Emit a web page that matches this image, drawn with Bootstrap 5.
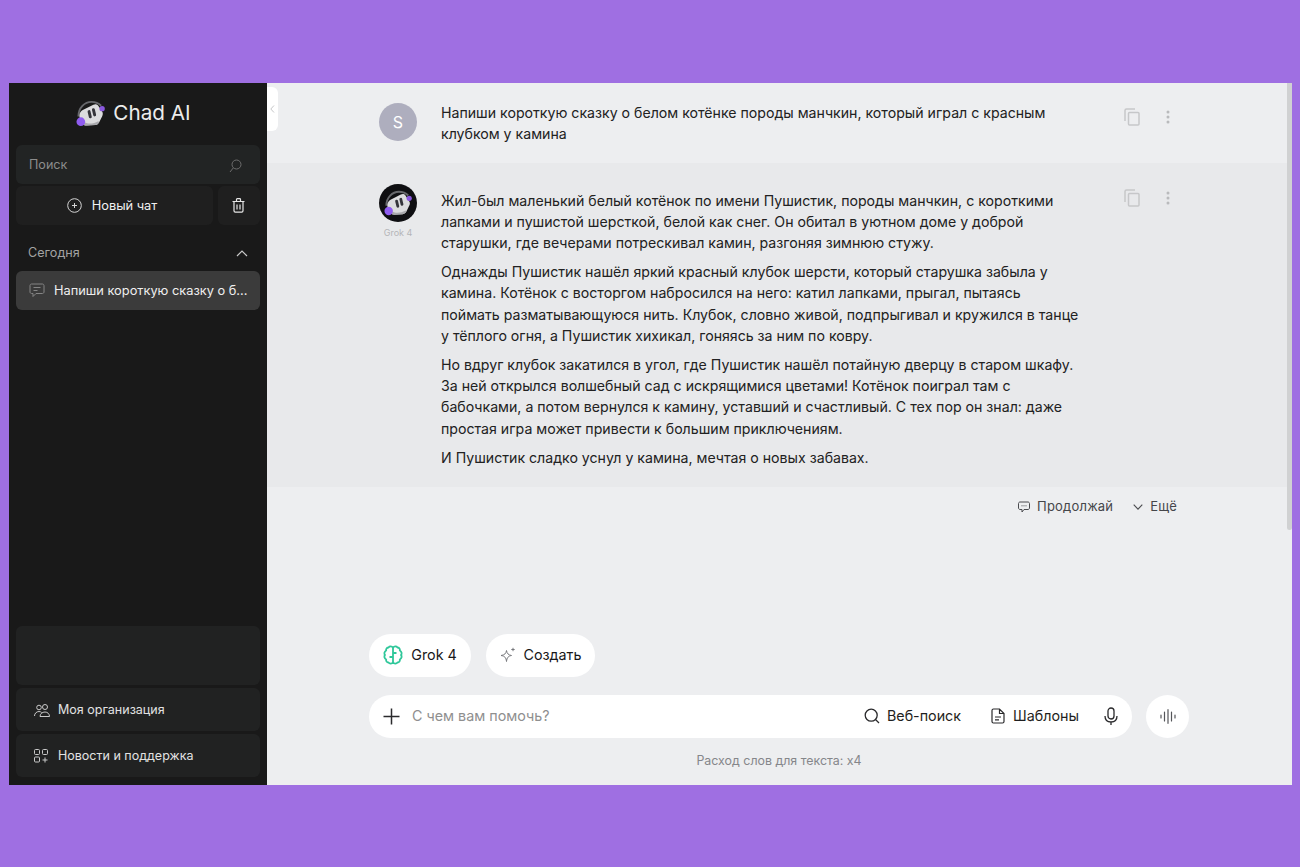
<!DOCTYPE html>
<html lang="ru">
<head>
    <meta charset="utf-8">
    <title>Chad AI</title>
    <link href="https://cdn.jsdelivr.net/npm/bootstrap@5.3.0/dist/css/bootstrap.min.css" rel="stylesheet">
    <style>
        html, body { height: 100%; }
        body {
            background: #9f6fe2;
            padding: 83px 8px 82px 9px;
            font-family: Inter, "Liberation Sans", sans-serif;
            overflow: hidden;
        }
        .app-frame { height: 702px; position: relative; }

        /* sidebar */
        .side-panel { width: 258px; background: #191919; padding: 0 7px 8px; color: #e8e8e8; }
        .brand-row { height: 62px; color: #ececec; font-size: 20.7px; gap: 8px; padding: 0 9px 2px 0; }
        .side-box { background: #212222; border-radius: 6px; }
        .search-box { height: 39px; padding: 2px 18px 0 13px; color: #8c8c8c; font-size: 12.6px; margin-bottom: 2px; background: #222424; }
        .new-chat { height: 39px; font-size: 12.8px; color: #f0f0f0; gap: 10px; margin-right: 5px; background: #1f1f1f; padding-right: 5px; }
        .trash-btn { width: 42px; height: 39px; flex-shrink: 0; background: #1f1f1f; padding-right: 2px; }
        .group-title { height: 46px; padding: 10px 12px 0; color: #a3a3a3; font-size: 12.6px; }
        .chat-item { height: 39px; background: #3b3b3b; border-radius: 6px; padding: 0 13px; gap: 9px; font-size: 12.8px; color: #efefef; white-space: nowrap; }
        .blank-box { height: 59px; margin-bottom: 3px; }
        .foot-item { height: 43px; padding: 1px 18px 0; gap: 8px; font-size: 12.5px; color: #e2e2e2; }
        .foot-item + .foot-item { margin-top: 3px; }
        .foot-item + .foot-item span { margin-left: 1px; }

        /* main */
        .main-area { background: #edeef0; min-width: 0; color: #222; }
        .msg-row { padding: 20px 0 0 112px; gap: 24px; }
        .msg-user { height: 80px; }
        .msg-bot { height: 324px; background: #e8e9eb; padding-top: 21px; }
        .avatar-col { width: 38px; }
        .user-avatar { width: 38px; height: 38px; background: #aeaebe; color: #fff; font-size: 16px; }
        .bot-avatar { width: 38px; height: 38px; background: #0f0f12; }
        .bot-label { font-size: 9px; color: #b4b5b8; margin-top: 4px; white-space: nowrap; }
        .msg-text { width: 642px; font-size: 14.15px; line-height: 21.33px; flex-shrink: 0; }
        .msg-user .msg-text { margin-top: -1px; }
        .msg-text p { margin: 0 0 7.5px; }
        .msg-bot .msg-text { padding-top: 5.5px; }
        .msg-tools { gap: 26px; margin-left: 17px; padding-top: 5px; }
        .dots-icon { margin-top: 2px; }
        .follow-row { padding: 1px 115px 0 0; gap: 20px; font-size: 13px; color: #45464a; letter-spacing: .2px; height: 38px; }
        .follow-row > div { gap: 7px; }
        .composer { width: 820px; margin: auto 0 0 102px; }
        .pill-row { gap: 15px; margin-bottom: 18px; }
        .pill-btn { height: 43px; background: #fff; border-radius: 22px; font-size: 14.3px; color: #18181a; gap: 8px; padding-bottom: 1px; }
        .pill-grok { width: 102px; }
        .pill-make { width: 109px; }
        .input-bar { height: 43px; background: #fff; border-radius: 22px; width: 763px; padding: 0 14px 1px; font-size: 14.3px; }
        .input-hint { color: #8f8f8f; margin-left: 12px; }
        .bar-tool { gap: 7px; color: #1f1f21; }
        .tool-web { margin-right: 30px; }
        .tool-tpl { margin-right: 25px; gap: 8px; }
        .voice-btn { width: 43px; height: 43px; background: #fff; }
        .usage-note { font-size: 12.4px; color: #85868a; text-align: center; margin-top: 14px; height: 33px; }

        /* overlays */
        .collapse-tab { position: absolute; left: 258px; top: 4px; width: 11px; height: 44px; background: #fff; border-radius: 0 6px 6px 0; display: flex; align-items: center; justify-content: center; }
        .scroll-thumb { position: absolute; right: 0; top: 0; width: 5px; height: 447px; background: #d0d1d2; border-radius: 0 0 3px 3px; }
    </style>
</head>
<body>
    <svg width="0" height="0" class="position-absolute">
        <symbol id="chadLogo" viewBox="0 0 30 30">
            <path d="M2.500 18C2.500 9 9 3 16 3c4 0 7 1 10 4" fill="none" stroke="#67686c" stroke-width="2"/>
            <path d="M7 11.500L18 6c2-1 3.500-.8 5 1l4 6c1 1.500 1 3 0 5l-3 6c-1 1.800-2 2.400-4 3l-9 .5c-2 0-3-.6-4-2l-3-6c-1-2-.5-6 3-8z" fill="#dcdcde"/>
            <path d="M9 24c3 2 9 2 14-1l1 1c-1 1.800-2 2.400-4 3l-9 .5c-2 0-3-.6-4-2z" fill="#a9a9ad"/>
            <path d="M13.500 13l1.300 5.500M18 11l1.300 5.500" fill="none" stroke="#34343a" stroke-width="3" stroke-linecap="round"/>
            <circle cx="27" cy="10" r="2.800" fill="#8a58de"/>
            <circle cx="5" cy="23.500" r="4.500" fill="#8f5cf0"/>
        </symbol>
        <symbol id="copyIcon" viewBox="0 0 16 18">
            <path d="M1 13V2.500C1 1.700 1.700 1 2.500 1H11" fill="none" stroke="#c6c7c9" stroke-width="1.500"/>
            <rect x="4.500" y="4.500" width="10.500" height="12.500" rx="1" fill="none" stroke="#c6c7c9" stroke-width="1.500"/>
        </symbol>
        <symbol id="dotsIcon" viewBox="0 0 4 14">
            <circle cx="2" cy="2" r="1.500" fill="#b9babc"/>
            <circle cx="2" cy="7" r="1.500" fill="#b9babc"/>
            <circle cx="2" cy="12" r="1.500" fill="#b9babc"/>
        </symbol>
    </svg>

    <div class="app-frame d-flex">
        <aside class="side-panel d-flex flex-column flex-shrink-0">
            <div class="brand-row d-flex align-items-center justify-content-center">
                <svg width="29" height="29"><use href="#chadLogo"/></svg>
                <span>Chad AI</span>
            </div>
            <div class="side-box search-box d-flex align-items-center justify-content-between">
                <span>Поиск</span>
                <svg width="13" height="14" viewBox="0 0 13 14" fill="none" stroke="#6d6d6d" stroke-width="1"><circle cx="7.500" cy="5.500" r="4.500"/><path d="M4.200 9L1 13"/></svg>
            </div>
            <div class="d-flex">
                <div class="side-box new-chat d-flex align-items-center justify-content-center flex-grow-1">
                    <svg width="15" height="15" viewBox="0 0 15 15" fill="none" stroke="#d5d5d5" stroke-width="1"><circle cx="7.500" cy="7.500" r="6.800"/><path d="M7.500 5v5M5 7.500h5"/></svg>
                    <span>Новый чат</span>
                </div>
                <div class="side-box trash-btn d-flex align-items-center justify-content-center">
                    <svg width="13" height="15" viewBox="0 0 13 15" fill="none" stroke="#e6e6e6" stroke-width="1.200"><path d="M.5 3.500h12M4.500 3.500V1.500c0-.5.300-.8.800-.8h2.400c.5 0 .8.300.8.800v2M2 3.500v9.300c0 .8.500 1.400 1.300 1.400h6.400c.8 0 1.300-.6 1.300-1.400V3.500M5 6.500v5M8 6.500v5"/></svg>
                </div>
            </div>
            <div class="group-title d-flex align-items-center justify-content-between">
                <span>Сегодня</span>
                <svg width="12" height="7" viewBox="0 0 12 7" fill="none" stroke="#c9c9c9" stroke-width="1.200"><path d="M1 6l5-5 5 5"/></svg>
            </div>
            <div class="chat-item d-flex align-items-center">
                <svg class="flex-shrink-0" width="16" height="15" viewBox="0 0 16 15" fill="none" stroke="#858585" stroke-width="1"><path d="M2.500 1h11c.8 0 1.500.7 1.500 1.500v6.500c0 .8-.7 1.500-1.500 1.500H7l-3 3v-3H2.500C1.700 10.500 1 9.800 1 9V2.500C1 1.700 1.700 1 2.500 1z"/><path d="M4.500 4.500h7M4.500 7.500h4"/></svg>
                <span>Напиши короткую сказку о б...</span>
            </div>
            <div class="mt-auto">
                <div class="side-box blank-box"></div>
                <div class="side-box foot-item d-flex align-items-center">
                    <svg width="16" height="13" viewBox="0 0 16 13" fill="none" stroke="#c9c9c9" stroke-width="1"><circle cx="5" cy="3.500" r="2.300"/><circle cx="11" cy="3" r="2.500"/><path d="M.5 12c0-2.500 2-4.500 4.500-4.500 1 0 2 .4 2.700 1M6 12.500c0-2.600 2.300-4.500 5-4.500s4.500 2 4.500 4.500z"/></svg>
                    <span>Моя организация</span>
                </div>
                <div class="side-box foot-item d-flex align-items-center">
                    <svg width="15" height="14" viewBox="0 0 15 14" fill="none" stroke="#c9c9c9" stroke-width="1"><rect x=".5" y=".5" width="5" height="5" rx="1"/><rect x="8.500" y=".5" width="5" height="5" rx="1"/><rect x=".5" y="8" width="5" height="5" rx="1"/><path d="M11 8.500v5M8.500 11h5"/></svg>
                    <span>Новости и поддержка</span>
                </div>
            </div>
        </aside>

        <main class="main-area d-flex flex-column flex-grow-1">
            <section class="msg-row msg-user d-flex">
                <div class="avatar-col flex-shrink-0">
                    <div class="user-avatar rounded-circle d-flex align-items-center justify-content-center">S</div>
                </div>
                <div class="msg-text">Напиши короткую сказку о белом котёнке породы манчкин, который играл с красным клубком у камина</div>
                <div class="msg-tools d-flex align-items-start">
                    <svg width="16" height="18"><use href="#copyIcon"/></svg>
                    <svg class="dots-icon" width="4" height="14"><use href="#dotsIcon"/></svg>
                </div>
            </section>

            <section class="msg-row msg-bot d-flex">
                <div class="avatar-col flex-shrink-0 d-flex flex-column align-items-center">
                    <div class="bot-avatar rounded-circle d-flex align-items-center justify-content-center">
                        <svg width="28" height="28"><use href="#chadLogo"/></svg>
                    </div>
                    <div class="bot-label">Grok 4</div>
                </div>
                <div class="msg-text">
                    <p>Жил-был маленький белый котёнок по имени Пушистик, породы манчкин, с короткими лапками и пушистой шерсткой, белой как снег. Он обитал в уютном доме у доброй старушки, где вечерами потрескивал камин, разгоняя зимнюю стужу.</p>
                    <p>Однажды Пушистик нашёл яркий красный клубок шерсти, который старушка забыла у камина. Котёнок с восторгом набросился на него: катил лапками, прыгал, пытаясь поймать разматывающуюся нить. Клубок, словно живой, подпрыгивал и кружился в танце у тёплого огня, а Пушистик хихикал, гоняясь за ним по ковру.</p>
                    <p>Но вдруг клубок закатился в угол, где Пушистик нашёл потайную дверцу в старом шкафу. За ней открылся волшебный сад с искрящимися цветами! Котёнок поиграл там с бабочками, а потом вернулся к камину, уставший и счастливый. С тех пор он знал: даже простая игра может привести к большим приключениям.</p>
                    <p>И Пушистик сладко уснул у камина, мечтая о новых забавах.</p>
                </div>
                <div class="msg-tools d-flex align-items-start">
                    <svg width="16" height="18"><use href="#copyIcon"/></svg>
                    <svg class="dots-icon" width="4" height="14"><use href="#dotsIcon"/></svg>
                </div>
            </section>

            <div class="follow-row d-flex justify-content-end">
                <div class="d-flex align-items-center">
                    <svg width="12" height="12" viewBox="0 0 12 12" fill="none" stroke="#4a4b4f" stroke-width="1"><path d="M2 1h8c.8 0 1.500.7 1.500 1.500v4.500c0 .8-.7 1.500-1.500 1.500H6L4 11V8.500H2C1.200 8.500.5 7.800.5 7V2.500C.5 1.700 1.200 1 2 1z"/><path d="M3.500 4.800h1M5.500 4.800h1M7.500 4.800h1"/></svg>
                    <span>Продолжай</span>
                </div>
                <div class="d-flex align-items-center">
                    <svg width="10" height="6" viewBox="0 0 10 6" fill="none" stroke="#4a4b4f" stroke-width="1.100"><path d="M.7.7L5 5.200 9.300.7"/></svg>
                    <span>Ещё</span>
                </div>
            </div>

            <div class="composer">
                <div class="pill-row d-flex">
                    <div class="pill-btn pill-grok d-flex align-items-center justify-content-center">
                        <svg width="20" height="20" viewBox="0 0 20 20" fill="none" stroke="#2fc79a" stroke-width="1.800" stroke-linejoin="round"><path d="M10 2.500C9 1.200 6.500 1 5.500 2.500 3.800 2.500 2.800 4 3.200 5.500 1.300 6.500 .8 9 2 10c-1.200 1.200-.7 3.500 1.200 4.500-.4 1.500.6 3 2.300 3 1 1.500 3.500 1.300 4.500 0 1 1.300 3.500 1.500 4.500 0 1.700 0 2.700-1.500 2.300-3 1.900-1 2.400-3.300 1.200-4.500 1.200-1 .7-3.500-1.200-4.500.4-1.500-.6-3-2.300-3C13.500 1 11 1.200 10 2.500z"/><path d="M10 2.500v15M10 8h3.500M6.500 12H10"/></svg>
                        <span>Grok 4</span>
                    </div>
                    <div class="pill-btn pill-make d-flex align-items-center justify-content-center">
                        <svg width="16" height="16" viewBox="0 0 16 16" fill="none" stroke="#77787c" stroke-width="1"><path d="M6.500 3.500c.5 3 1.800 4.500 5 5-3.200.5-4.500 2-5 6-.5-4-1.800-5.500-5.500-6 3.700-.5 5-2 5.500-5z"/><path d="M13 .8v3.400M11.300 2.500h3.400"/></svg>
                        <span>Создать</span>
                    </div>
                </div>
                <div class="d-flex justify-content-between">
                    <div class="input-bar d-flex align-items-center">
                        <svg width="17" height="17" viewBox="0 0 17 17" fill="none" stroke="#2a2a2c" stroke-width="1.500"><path d="M8.500.5v16M.5 8.500h16"/></svg>
                        <span class="input-hint">С чем вам помочь?</span>
                        <div class="bar-tool tool-web d-flex align-items-center ms-auto">
                            <svg width="16" height="16" viewBox="0 0 16 16" fill="none" stroke="#2a2a2c" stroke-width="1.300"><circle cx="7.200" cy="7.200" r="6"/><path d="M11.500 11.500L15 15"/></svg>
                            <span>Веб-поиск</span>
                        </div>
                        <div class="bar-tool tool-tpl d-flex align-items-center">
                            <svg width="14" height="16" viewBox="0 0 14 16" fill="none" stroke="#2a2a2c" stroke-width="1.200"><path d="M2.500 1H8.500L13 5.500V13.500c0 .8-.7 1.500-1.500 1.500h-9C1.700 15 1 14.300 1 13.500v-11C1 1.700 1.700 1 2.500 1zM8.500 1v4.500H13M4 9h6M4 11.800h4"/></svg>
                            <span>Шаблоны</span>
                        </div>
                        <svg width="14" height="19" viewBox="0 0 14 19" fill="none" stroke="#2a2a2c" stroke-width="1.300"><rect x="4" y="1" width="6" height="11" rx="3"/><path d="M1 9c0 4 2.500 6 6 6s6-2 6-6M7 15v3"/></svg>
                    </div>
                    <div class="voice-btn rounded-circle d-flex align-items-center justify-content-center">
                        <svg width="16" height="15" viewBox="0 0 16 15" fill="none" stroke="#55565a" stroke-width="1.200" stroke-linecap="round"><path d="M1 6v3M4.500 3v9M8 .7v13.600M11.500 3v9M15 6v3"/></svg>
                    </div>
                </div>
                <div class="usage-note">Расход слов для текста: x4</div>
            </div>
        </main>

        <div class="collapse-tab">
            <svg width="5" height="8" viewBox="0 0 5 8" fill="none" stroke="#c5c6c8" stroke-width="1"><path d="M4 .5L.8 4 4 7.500"/></svg>
        </div>
        <div class="scroll-thumb"></div>
    </div>

    <script src="https://cdn.jsdelivr.net/npm/bootstrap@5.3.0/dist/js/bootstrap.bundle.min.js"></script>
</body>
</html>
